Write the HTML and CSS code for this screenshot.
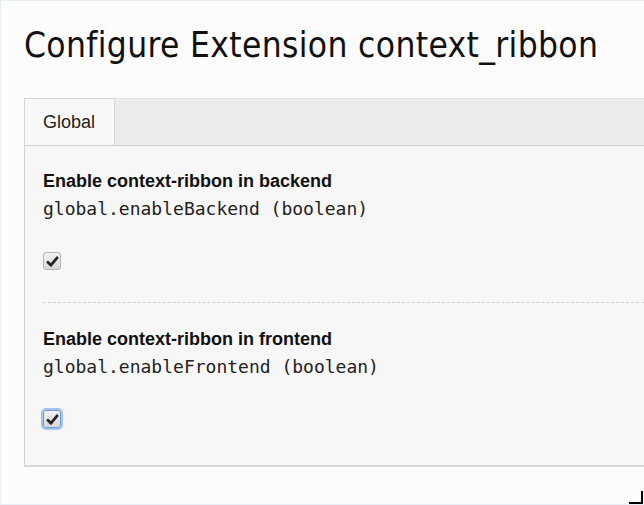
FILE: index.html
```html
<!DOCTYPE html>
<html lang="en">
<head>
<meta charset="utf-8">
<title>Configure Extension context_ribbon</title>
<link rel="stylesheet" href="styles.css">
</head>
<body>
<div class="page">
  <h1 class="title">Configure Extension context_ribbon</h1>
  <div class="tabs">
    <div class="tab-bar">
      <div class="tab active">Global</div>
    </div>
    <div class="tab-panel">
      <div class="field">
        <div class="label">Enable context-ribbon in backend</div>
        <div class="key">global.enableBackend (boolean)</div>
        <span class="check"><svg viewBox="0 0 12 12" class="tick"><path d="M1.8 6.6 L4.6 9.4 L10.2 2.6" /></svg></span>
      </div>
      <div class="sep"></div>
      <div class="field">
        <div class="label">Enable context-ribbon in frontend</div>
        <div class="key">global.enableFrontend (boolean)</div>
        <span class="check focus"><svg viewBox="0 0 12 12" class="tick"><path d="M1.8 6.6 L4.6 9.4 L10.2 2.6" /></svg></span>
      </div>
    </div>
  </div>
  <div class="grip"></div>
</div>
</body>
</html>
```
FILE: styles.css
```css
html, body {
  margin: 0;
  padding: 0;
  height: 100%;
}
body {
  background: #fcfcfc;
  overflow: hidden;
}
.page {
  position: relative;
  height: 100%;
  box-sizing: border-box;
  border: 1px solid #e9eff6;
  border-right: none;
  padding: 20px 0 0 23px;
  font-family: "Liberation Sans", Arial, sans-serif;
  color: #111;
}
.title {
  margin: 0 0 29px;
  font-family: "DejaVu Sans Condensed", "DejaVu Sans", sans-serif;
  font-stretch: condensed;
  font-weight: normal;
  font-size: 35px;
  line-height: 48px;
  letter-spacing: 0.35px;
  color: #111;
  white-space: nowrap;
}
.tabs {
  margin-right: -40px;
}
.tab-bar {
  display: flex;
  background: #ececec;
  border-top: 1px solid #e4e4e4;
  border-bottom: 1px solid #cfcfcf;
  height: 46px;
}
.tab {
  box-sizing: border-box;
  width: 91px;
  height: 47px;
  margin-top: -1px;
  padding: 0 0 0 18px;
  line-height: 47px;
  font-size: 18px;
  color: #222;
  background: #f8f8f8;
  border: 1px solid #d6d6d6;
  border-bottom: none;
  border-radius: 2px 2px 0 0;
  margin-bottom: -1px;
  position: relative;
  z-index: 1;
}
.tab-panel {
  background: #f7f7f7;
  border-left: 1px solid #d4d4d4;
  border-bottom: 2px solid #d8d8d8;
  padding: 23px 0 37px 18px;
}
.label {
  font-weight: bold;
  font-size: 18px;
  line-height: 24px;
  color: #111;
}
.key {
  font-family: "DejaVu Sans Mono", "Liberation Mono", monospace;
  font-size: 18px;
  line-height: 24px;
  color: #222;
  margin-top: 4px;
}
.check {
  display: flex;
  align-items: center;
  justify-content: center;
  box-sizing: border-box;
  width: 18px;
  height: 18px;
  margin-top: 31px;
  border: 1px solid #b4b4b4;
  border-radius: 3px;
  background: linear-gradient(#f2f2f2, #d9d9d9);
}
.check.focus {
  border-color: #6d9ad6;
  box-shadow: 0 0 0 2px #a3c4ee;
}
.tick {
  width: 13px;
  height: 13px;
}
.tick path {
  fill: none;
  stroke: #262626;
  stroke-width: 2.6;
  stroke-linecap: round;
  stroke-linejoin: round;
}
.sep {
  border-top: 1px dashed #cfcfcf;
  margin: 32px 0 24px;
}
.grip {
  position: absolute;
  right: 1px;
  bottom: 0;
  width: 12px;
  height: 11px;
  border-right: 2px solid #000;
  border-bottom: 2px solid #000;
}
```
